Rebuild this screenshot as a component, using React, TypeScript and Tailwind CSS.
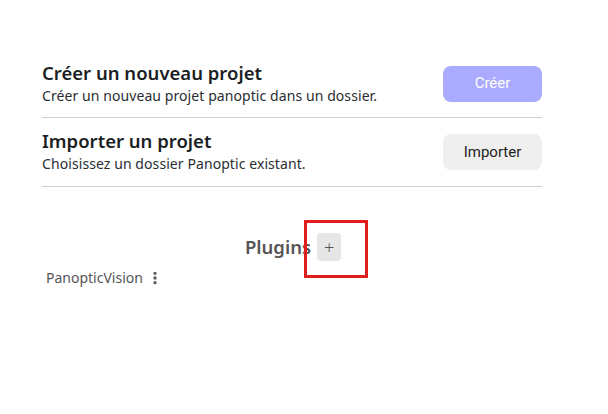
import { EllipsisVertical } from 'lucide-react';

function ActionRow({
  title,
  subtitle,
  label,
  primary,
  height,
}: {
  title: string;
  subtitle: string;
  label: string;
  primary?: boolean;
  height: string;
}) {
  return (
    <div className={`flex items-center justify-between border-b border-[#c8d1da] ${height}`}>
      <div>
        <div className="text-[18.5px] leading-[24px] font-semibold text-[#1b1f24]">{title}</div>
        <div className="text-[14px] leading-[22px] tracking-[0.08px] text-[#2a2e33]">{subtitle}</div>
      </div>
      <button
        className={
          primary
            ? 'h-[36px] w-[99px] rounded-lg bg-[#aaaafe] text-[15px] text-white'
            : 'h-[36px] w-[99px] rounded-lg bg-[#efefef] text-[15px] text-[#222]'
        }
        style={{ fontFamily: 'Roboto, sans-serif' }}
      >
        {label}
      </button>
    </div>
  );
}

export default function App() {
  return (
    <div
      className="h-[414px] w-[608px] bg-white pt-[50px]"
      style={{ fontFamily: '"Noto Sans", sans-serif' }}
    >
      <div className="ml-[42px] w-[500px]">
        <ActionRow
          title="Créer un nouveau projet"
          subtitle="Créer un nouveau projet panoptic dans un dossier."
          label="Créer"
          primary
          height="h-[68px]"
        />
        <ActionRow
          title="Importer un projet"
          subtitle="Choisissez un dossier Panoptic existant."
          label="Importer"
          height="h-[69px]"
        />
      </div>
      <div className="mt-[46px] flex items-center justify-center gap-[6px] pr-[22px]">
        <span className="text-[18.5px] font-semibold text-[#555]">Plugins</span>
        <span className="relative">
          <span className="flex h-[28px] w-[24px] items-center justify-center rounded bg-[#e6e6e6] text-[18px] font-light text-[#555]">
            +
          </span>
          <span className="absolute top-[-13px] left-[-13px] h-[58px] w-[64px] border-[3px] border-[#e21d1d]" />
        </span>
      </div>
      <div className="mt-[6px] flex items-center gap-[4px] pl-[46px] text-[14px] text-[#555]">
        <span>PanopticVision</span>
        <EllipsisVertical size={16} strokeWidth={3} />
      </div>
    </div>
  );
}
